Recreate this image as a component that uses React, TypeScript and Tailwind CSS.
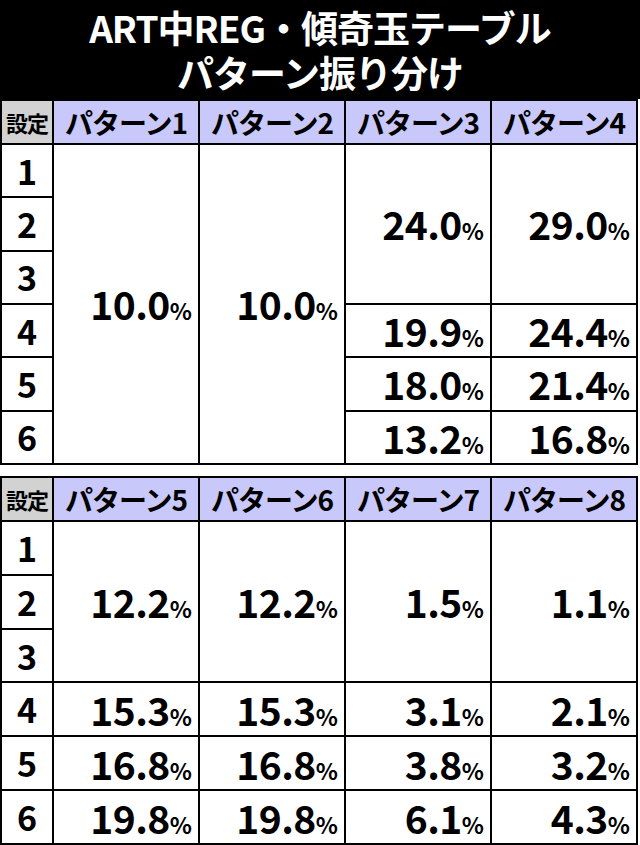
import React from "react";

type Cell = { value: string; rows: number };

const font = { fontFamily: '"Noto Sans CJK JP", "Noto Sans", sans-serif' };

const Pct = ({ value }: { value: string }) => (
    <span className="leading-none">
        <span className="text-[39px] tracking-[-0.5px]">{value}</span>
        <span className="text-[23px]">%</span>
    </span>
);

const ValueCell = ({ cell }: { cell: Cell }) => {
    const span =
        cell.rows === 6 ? "row-span-6" : cell.rows === 3 ? "row-span-3" : "row-span-1";
    return (
        <div className={`${span} bg-white flex items-center justify-end pr-[6px] font-bold text-black`}>
            <Pct value={cell.value} />
        </div>
    );
};

const Table = ({
    patterns,
    columns,
    height,
}: {
    patterns: string[];
    columns: Cell[][];
    height: string;
}) => (
    <div
        className={`grid grid-cols-[50px_repeat(4,1fr)] grid-rows-[42px_repeat(6,1fr)] grid-flow-col gap-[2px] p-[2px] bg-black w-[638px] ${height}`}
    >
        <div className="bg-[#d2d2d2] flex items-center justify-center text-[22px] font-bold text-black tracking-[-1px]">
            設定
        </div>
        {[1, 2, 3, 4, 5, 6].map((n) => (
            <div key={n} className="bg-white flex items-center justify-center text-[34px] font-bold text-black leading-none">
                {n}
            </div>
        ))}
        {patterns.map((p, i) => (
            <React.Fragment key={p}>
                <div className="bg-[#c8c8fa] flex items-center justify-center text-[28px] font-bold text-black tracking-[-1px] leading-none">
                    {p}
                </div>
                {columns[i].map((c, j) => (
                    <ValueCell key={j} cell={c} />
                ))}
            </React.Fragment>
        ))}
    </div>
);

export default function App() {
    return (
        <div className="w-[640px] h-[845px] bg-white overflow-hidden" style={font}>
            {/* title */}
            <div className="bg-black h-[99px] flex flex-col items-center justify-center text-white font-bold text-[37px] leading-[45px] tracking-[-1px]">
                <div>ART中REG・傾奇玉テーブル</div>
                <div>パターン振り分け</div>
            </div>
            <Table
                height="h-[366px]"
                patterns={["パターン1", "パターン2", "パターン3", "パターン4"]}
                columns={[
                    [{ value: "10.0", rows: 6 }],
                    [{ value: "10.0", rows: 6 }],
                    [
                        { value: "24.0", rows: 3 },
                        { value: "19.9", rows: 1 },
                        { value: "18.0", rows: 1 },
                        { value: "13.2", rows: 1 },
                    ],
                    [
                        { value: "29.0", rows: 3 },
                        { value: "24.4", rows: 1 },
                        { value: "21.4", rows: 1 },
                        { value: "16.8", rows: 1 },
                    ],
                ]}
            />
            <div className="h-[11px]" />
            <Table
                height="h-[369px]"
                patterns={["パターン5", "パターン6", "パターン7", "パターン8"]}
                columns={[
                    [
                        { value: "12.2", rows: 3 },
                        { value: "15.3", rows: 1 },
                        { value: "16.8", rows: 1 },
                        { value: "19.8", rows: 1 },
                    ],
                    [
                        { value: "12.2", rows: 3 },
                        { value: "15.3", rows: 1 },
                        { value: "16.8", rows: 1 },
                        { value: "19.8", rows: 1 },
                    ],
                    [
                        { value: "1.5", rows: 3 },
                        { value: "3.1", rows: 1 },
                        { value: "3.8", rows: 1 },
                        { value: "6.1", rows: 1 },
                    ],
                    [
                        { value: "1.1", rows: 3 },
                        { value: "2.1", rows: 1 },
                        { value: "3.2", rows: 1 },
                        { value: "4.3", rows: 1 },
                    ],
                ]}
            />
        </div>
    );
}
